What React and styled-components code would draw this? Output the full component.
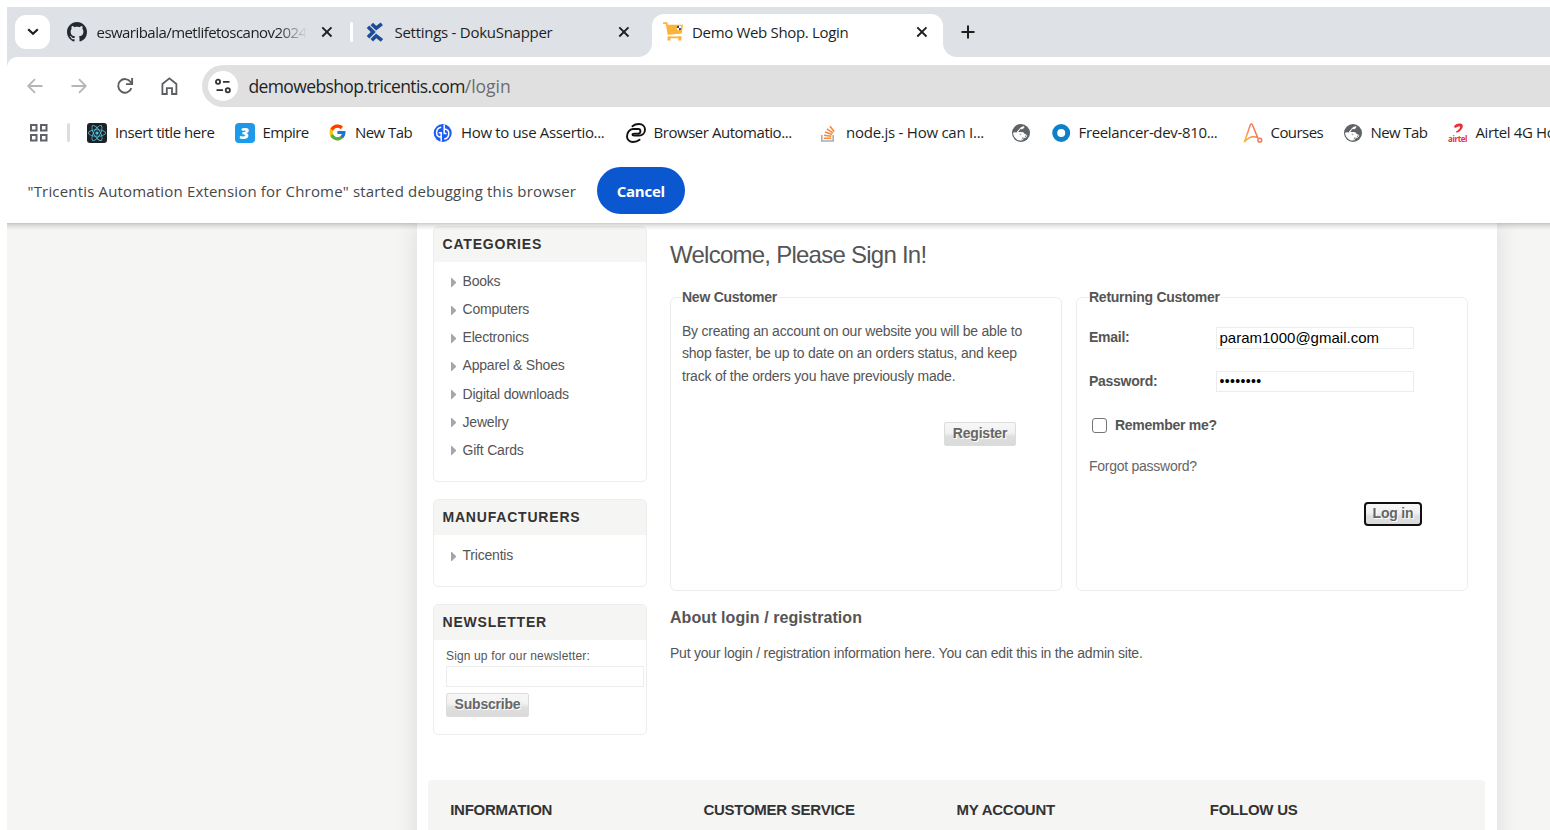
import React from "react";
import styled, { createGlobalStyle, css } from "styled-components";
import { FcGoogle } from "react-icons/fc";
import { FaReact } from "react-icons/fa";

const GlobalStyle = createGlobalStyle`
  * { box-sizing: border-box; }
  body { margin: 0; background: #fff; overflow: hidden; }
`;

/* ---------- browser window ---------- */

const Window = styled.div`
  height: 830px;
  padding: 7px 0 0 7px;
  display: flex;
  flex-direction: column;
  overflow: hidden;
  background: #fff;
  font-family: "Open Sans", "Noto Sans", sans-serif;
  font-size: 15px;
  color: #1f1f1f;
  white-space: nowrap;
`;

const TabStrip = styled.div`
  height: 50px;
  flex: none;
  display: flex;
  align-items: flex-start;
  padding-left: 8px;
  background: #dee1e6;
`;

const TabSearch = styled.button`
  width: 35px;
  height: 34px;
  margin-top: 8px;
  padding: 0;
  border: 0;
  border-radius: 11px;
  background: #fff;
  display: grid;
  place-items: center;
`;

const TabBox = styled.div`
  position: relative;
  width: ${(p) => p.$width}px;
  height: 43px;
  margin-top: 7px;
  padding: 0 ${(p) => p.$right}px 7px ${(p) => p.$left}px;
  display: flex;
  align-items: center;
  border-radius: 12px 12px 0 0;
  ${(p) =>
    p.$active &&
    css`
      background: #fff;
      &::before,
      &::after {
        content: "";
        position: absolute;
        bottom: 0;
        width: 14px;
        height: 14px;
      }
      &::before {
        left: -14px;
        background: radial-gradient(circle at 0 0, transparent 13.5px, #fff 14.5px);
      }
      &::after {
        right: -14px;
        background: radial-gradient(circle at 100% 0, transparent 13.5px, #fff 14.5px);
      }
    `}
  svg { flex: none; }
`;

const TabTitle = styled.span`
  flex: 1;
  min-width: 0;
  margin: 0 ${(p) => (p.$fade ? 14 : 10)}px 0 9.5px;
  overflow: hidden;
  line-height: 22px;
  letter-spacing: ${(p) => p.$ls}px;
  ${(p) =>
    p.$fade &&
    css`
      mask-image: linear-gradient(90deg, #000 86%, transparent 100%);
    `}
`;

const TabDivider = styled.i`
  width: 3px;
  height: 20px;
  margin-top: 15px;
  border-radius: 2px;
  background: #fff;
`;

const NewTab = styled.div`
  width: 14px;
  height: 50px;
  margin-left: 18px;
  display: grid;
  place-items: center;
`;

const Toolbar = styled.div`
  height: 50px;
  flex: none;
  display: flex;
  background: linear-gradient(#dee1e6, #dee1e6) 0 0 / 20px 12px no-repeat;
`;

const ToolbarInner = styled.div`
  flex: 1;
  display: flex;
  align-items: center;
  padding-top: 8px;
  padding-left: 16px;
  border-top-left-radius: 10px;
  background: #fff;
`;

const NavButton = styled.span`
  width: 24px;
  height: 24px;
  margin-right: ${(p) => p.$gap}px;
  display: grid;
  place-items: center;
`;

const AddressBar = styled.div`
  flex: 1;
  height: 42px;
  padding-left: 6px;
  display: flex;
  align-items: center;
  border-radius: 21px 0 0 21px;
  background: #e0e0e0;
`;

const SiteInfo = styled.span`
  width: 30px;
  height: 30px;
  margin-right: 10.5px;
  border-radius: 50%;
  background: #fff;
  display: grid;
  place-items: center;
`;

const Host = styled.span`
  font-size: 17.5px;
  line-height: 26px;
  letter-spacing: -0.62px;
`;

const Path = styled(Host)`
  color: #6a6d70;
  letter-spacing: 0;
`;

const Bookmarks = styled.div`
  height: 51px;
  flex: none;
  display: flex;
  align-items: center;
  padding-left: 22px;
`;

const AppsButton = styled.span`
  flex: none;
  width: 38px;
  display: flex;
`;

const BookmarkDivider = styled.i`
  flex: none;
  width: 3px;
  height: 19px;
  margin-right: 17px;
  border-radius: 2px;
  background: #dadde2;
`;

const Bookmark = styled.span`
  flex: none;
  width: ${(p) => p.$width}px;
  display: flex;
  align-items: center;
  gap: 8px;
  line-height: 22px;
  letter-spacing: ${(p) => p.$ls}px;
  svg { flex: none; }
`;

const BookmarkLabel = styled.span`
  padding-bottom: 2px;
`;

const InfoBar = styled.div`
  height: 65px;
  flex: none;
  display: flex;
  align-items: center;
  padding: 0 0 0 20.5px;
  color: #45484b;
  letter-spacing: 0.17px;
`;

const CancelButton = styled.button`
  width: 88px;
  height: 47px;
  margin-left: 20.6px;
  padding: 1px 0 0;
  border: 0;
  border-radius: 24px;
  background: #0b57d0;
  color: #fff;
  font: 700 15px "Open Sans", sans-serif;
  letter-spacing: -0.25px;
`;

/* ---------- shop page ---------- */

const Page = styled.div`
  position: relative;
  flex: 1;
  min-height: 0;
  padding-left: 410px;
  overflow: hidden;
  background: #f5f5f3;
  font-family: "Liberation Sans", Arial, sans-serif;
  font-size: 14px;
  letter-spacing: -0.22px;
  color: #555;
  &::after {
    content: "";
    position: absolute;
    inset: 0 0 auto 0;
    height: 7px;
    background: linear-gradient(rgba(0, 0, 0, 0.2), rgba(0, 0, 0, 0.09) 40%, transparent);
  }
`;

const Master = styled.div`
  width: 1080px;
  height: 640px;
  background: #fff;
  box-shadow: 0 0 22px rgba(0, 0, 0, 0.11);
`;

const Columns = styled.div`
  height: 557px;
  display: flex;
  padding: 3px 29px 0 16px;
`;

const Side = styled.aside`
  width: 214px;
  margin-right: 23px;
  display: flex;
  flex-direction: column;
  gap: 17px;
`;

const Block = styled.section`
  height: ${(p) => p.$height}px;
  flex: none;
  border: 1px solid #ededeb;
  border-radius: 5px;
  overflow: hidden;
`;

const BlockTitle = styled.h2`
  height: 35px;
  margin: 0;
  padding: 0 0 0 8.5px;
  background: #f5f5f3;
  color: #333;
  font-size: 14px;
  line-height: 34px;
  letter-spacing: 0.8px;
`;

const LinkList = styled.ul`
  list-style: none;
  margin: 0;
  padding: ${(p) => p.$top}px 0 0 17px;
`;

const LinkItem = styled.li`
  height: 28.15px;
  display: flex;
  align-items: center;
  gap: 6.5px;
  letter-spacing: -0.2px;
  svg { margin-top: 2px; }
`;

const NewsletterBody = styled.div`
  padding: 8px 0 0 12px;
  display: flex;
  flex-direction: column;
  align-items: flex-start;
`;

const NewsletterLabel = styled.label`
  height: 18px;
  font-size: 12px;
  line-height: 17px;
  letter-spacing: 0.14px;
`;

const TextField = styled.input`
  width: 198px;
  height: ${(p) => p.$height}px;
  margin: 0;
  padding: 0 3px 1px 2.5px;
  border: 1px solid #ececec;
  outline: 0;
  background: #fff;
  color: #000;
  font: 15px "Liberation Sans", Arial, sans-serif;
  letter-spacing: 0;
  ${(p) =>
    p.type === "password" &&
    css`
      font-size: 14px;
      letter-spacing: 0.35px;
    `}
`;

const ShopButton = styled.button`
  width: ${(p) => p.$width}px;
  height: 24px;
  margin-top: ${(p) => p.$top}px;
  padding: 0 0 2px;
  border: 1px solid #dcdcdc;
  border-radius: 2px;
  background: linear-gradient(#f7f7f7, #f1f1f1 45%, #dfdfdf 60%, #dadada);
  color: #666;
  font: bold 14px/18px "Liberation Sans", Arial, sans-serif;
  letter-spacing: -0.2px;
  text-shadow: 1px 1px 0 #fff;
  ${(p) =>
    p.$focused &&
    css`
      border: 2px solid #101010;
      border-radius: 4px;
    `}
`;

const Main = styled.main`
  flex: 1;
`;

const PageTitle = styled.h1`
  height: 63px;
  margin: 0;
  padding-top: 15px;
  color: #555;
  font-size: 24px;
  font-weight: 400;
  line-height: 28px;
  letter-spacing: -0.75px;
`;

const Panels = styled.div`
  display: flex;
  gap: 14px;
`;

const Panel = styled.fieldset`
  width: 392px;
  height: 302px;
  min-width: 0;
  margin: 0;
  padding: 0 45px 0 ${(p) => p.$left}px;
  border: 1px solid #ececec;
  border-radius: 6px;
`;

const Legend = styled.legend`
  padding: 0 1px 0 0;
  font-weight: 700;
  line-height: 16px;
  letter-spacing: -0.26px;
`;

const Intro = styled.p`
  width: 350px;
  margin: 14.7px 0 0;
  line-height: 22.4px;
`;

const ButtonLine = styled.div`
  display: flex;
  justify-content: flex-end;
`;

const FieldRow = styled.div`
  height: ${(p) => p.$height}px;
  margin-top: 22px;
  display: grid;
  grid-template-columns: 127px 198px;
  align-items: center;
`;

const FieldLabel = styled.label`
  padding-bottom: 2px;
  font-weight: 700;
  line-height: 16px;
  letter-spacing: -0.27px;
`;

const RememberRow = styled.div`
  height: 16px;
  margin-top: 26px;
  display: flex;
  align-items: center;
`;

const CheckBox = styled.span`
  width: 15px;
  height: 15px;
  margin: 0 8px 1px 3px;
  border: 1px solid #767676;
  border-radius: 3px;
  background: #fff;
`;

const ForgotLink = styled.a`
  display: block;
  margin-top: 24px;
  line-height: 16px;
  letter-spacing: -0.26px;
  color: #666;
`;

const TopicTitle = styled.h2`
  margin: 17px 0 0;
  font-size: 16px;
  line-height: 20px;
  letter-spacing: 0.07px;
`;

const TopicText = styled.p`
  margin: 16px 0 0;
  line-height: 18px;
`;

const Footer = styled.footer`
  height: 83px;
  margin: 0 12px 0 11px;
  padding: 19px 0 0 22.2px;
  display: grid;
  grid-template-columns: repeat(4, 253.2px);
  border-radius: 4px 4px 0 0;
  background: #f5f5f3;
`;

const FooterTitle = styled.h3`
  margin: 0;
  color: #333;
  font-size: 15px;
  line-height: 22px;
  letter-spacing: -0.25px;
`;

/* ---------- icons ---------- */

const CloseIcon = () => (
  <svg width="12" height="12" viewBox="0 0 12 12" stroke="#1f1f1f" strokeWidth="1.9">
    <path d="M1.3 1.3l9.2 9.2M10.5 1.3L1.3 10.5" />
  </svg>
);

const GithubIcon = () => (
  <svg width="20" height="20" viewBox="0 0 16 16" fill="#24292f">
    <path d="M8 0C3.58 0 0 3.58 0 8c0 3.54 2.29 6.53 5.47 7.59.4.07.55-.17.55-.38 0-.19-.01-.82-.01-1.49-2.01.37-2.53-.49-2.69-.94-.09-.23-.48-.94-.82-1.13-.28-.15-.68-.52-.01-.53.63-.01 1.08.58 1.23.82.72 1.21 1.87.87 2.33.66.07-.52.28-.87.51-1.07-1.78-.2-3.64-.89-3.64-3.95 0-.87.31-1.59.82-2.15-.08-.2-.36-1.02.08-2.12 0 0 .67-.21 2.2.82.64-.18 1.32-.27 2-.27.68 0 1.36.09 2 .27 1.53-1.04 2.2-.82 2.2-.82.44 1.1.16 1.92.08 2.12.51.56.82 1.27.82 2.15 0 3.07-1.87 3.75-3.65 3.95.29.25.54.73.54 1.48 0 1.07-.01 1.93-.01 2.2 0 .21.15.46.55.38A8.01 8.01 0 0 0 16 8c0-4.42-3.58-8-8-8z" />
  </svg>
);

const SnapperIcon = () => (
  <svg width="20" height="20" viewBox="0 0 20 20" fill="none" stroke="#1d4c96" strokeWidth="3.6">
    <path d="M6.8 2l4.4 4.2L16.8 1.8M3 4.8l5.2 5.2L3 15.2M6.8 18.2l4.4-4.4 5.8 4.6" />
  </svg>
);

const CartIcon = () => (
  <svg width="20" height="20" viewBox="0 0 20 20">
    <path d="M0 1.2h3.6l2 11.3M5 15.4h13.5" fill="none" stroke="#fdb338" strokeWidth="1.8" />
    <path d="M3.5 2.8H20l-1.2 8.8-13.6 1.2z" fill="#fdb338" />
    <path d="M6 14.5v4M16.8 14.5v4" stroke="#fdb338" strokeWidth="3" />
    <circle cx="16" cy="6" r="2.4" fill="#fff" />
    <path d="M16 3.6a2.4 2.4 0 0 0-2.4 2.4H16zM16 8.4A2.4 2.4 0 0 0 18.4 6H16z" fill="#3d4a5c" />
  </svg>
);

const BackIcon = ({ flip }) => (
  <svg width="18" height="18" viewBox="0 0 18 18" fill="none" stroke="#b4b6b8" strokeWidth="1.8" transform={flip ? "scale(-1 1)" : undefined}>
    <path d="M16.5 9H2.5M9 2.2L2.2 9 9 15.8" />
  </svg>
);

const ReloadIcon = () => (
  <svg width="18" height="18" viewBox="0 0 18 18" fill="none" stroke="#5b5e61" strokeWidth="1.9">
    <path d="M15.4 11.2A6.8 6.8 0 1 1 14.6 5L16 6.6" />
    <path d="M16.1 1v6.1H10" />
  </svg>
);

const HomeIcon = () => (
  <svg width="18" height="20" viewBox="0 0 18 20" fill="none" stroke="#5b5e61" strokeWidth="1.8">
    <path d="M2.4 8L9.4 2.4 16.4 8v10H12v-5.8H6.8V18H2.4z" />
  </svg>
);

const TuneIcon = () => (
  <svg width="18" height="16" viewBox="0 0 18 16" fill="none" stroke="#303134" strokeWidth="1.8">
    <circle cx="4" cy="3.8" r="2.1" />
    <path d="M9 3.8h6.5M2.5 12.2H9" />
    <circle cx="13.8" cy="12.2" r="2.1" />
  </svg>
);

const AppsIcon = () => (
  <svg width="20" height="20" viewBox="0 0 20 20" fill="none" stroke="#5f6368" strokeWidth="2">
    <path d="M2 2h5.5v5.5H2zM12 2h5.5v5.5H12zM2 12h5.5v5.5H2zM12 12h5.5v5.5H12z" />
  </svg>
);

const ReactTile = styled.span`
  flex: none;
  width: 20px;
  height: 20px;
  border-radius: 3px;
  background: #202124;
  color: #53c1de;
  display: grid;
  place-items: center;
`;

const EmpireTile = styled.span`
  flex: none;
  width: 20px;
  height: 20px;
  border-radius: 4px;
  background: linear-gradient(#2497e3, #179df0);
  color: #fff;
  font: italic 800 16px/20px "Open Sans", sans-serif;
  letter-spacing: 0;
  text-align: center;
`;

const GoogleIcon = () => <FcGoogle size={19} />;

const AssertIcon = () => (
  <svg width="20" height="20" viewBox="0 0 20 20">
    <circle cx="9.7" cy="10" r="9" fill="#1d5bf5" />
    <path d="M8.200 4.200C5 4.600 3.600 7 3.600 10s1.400 4 4.600 4.200V9.800H5.800M11.200 16c3.200-.4 4.600-2.800 4.600-5.800s-1.400-4-4.600-4.200v4.400h2.400M11.200 1.500v5M8.200 18.500v-5" fill="none" stroke="#fff" strokeWidth="1.500" />
  </svg>
);

const LoopIcon = () => (
  <svg width="20" height="20" viewBox="0 0 20 20" fill="none" stroke="#111" strokeWidth="1.9" strokeLinecap="round">
    <path d="M6.400 3.200C8 1.800 10.400 1 13 1c3.600 0 6 2.400 6 5.600 0 3.400-2.400 6-6 6H8.200c-2.400 0-2.400-2 0-2h4.400" />
    <path d="M13.600 16.800C12 18.200 9.600 19 7 19c-3.600 0-6-2.400-6-5.600 0-3.400 2.400-7.400 6-7.400h5.400c2.600 0 2.600 4.600.2 4.600" />
  </svg>
);

const StackIcon = () => (
  <svg width="20" height="20" viewBox="0 0 20 20" fill="none">
    <path d="M3.800 12v6h11.400v-6" stroke="#a9adb2" strokeWidth="1.6" />
    <path d="M5.800 15.200h7.400M6 12.200l7.300 1.100M7 9l7 2.600M9 5.800l6 4.300M12 3.200l4.200 5.600" stroke="#f58a3c" strokeWidth="1.6" />
  </svg>
);

const GlobeIcon = () => (
  <svg width="20" height="20" viewBox="0 0 20 20">
    <circle cx="10" cy="10" r="9" fill="#5f6368" />
    <path d="M12.800 3.400c.2 1.600-.6 2.300-1.900 2.300H9.200c-.5 0-.8.4-.8.900 0 .9-.6 1.300-1.400 1.300v1.700h4.300c1.300 0 2 .9 2 2h1c1 0 1.500.7 1.300 1.500-.3 1.300-1.300 1.500-2.600 1.500-.9 0-1 .7-1 1.300 0 .8-.6 1-1.500 1L9.200 17.100c-3.800-.3-6.600-3.500-6.500-7.300l4.400.1c1.200.2 1.600 1 2 2.100.3.700 1.100.8 2.200.7" fill="none" stroke="#fff" strokeWidth="1" />
    <path d="M12.800 3.200c.2 1.800-.6 2.500-1.900 2.500H9.200c-.5 0-.8.4-.8.900 0 .9-.6 1.300-1.400 1.300v1.700h4.300c1.300 0 2 .9 2 2h1.600c-.1 2-1.300 2.800-3 2.800-.9 0-1 .7-1 1.300 0 .8-.6 1.400-1.700 1.400C5.400 17 2.600 13.800 2.700 10h3.600c1.600 0 2.200.9 2.400 1.700.2.700.9.800 1.900.7l-.8-1.600H6.200V8.600l4-4.600z" fill="#fff" />
  </svg>
);

const RingIcon = () => (
  <svg width="20" height="20" viewBox="0 0 20 20" fill="none">
    <circle cx="10.200" cy="10" r="6.500" stroke="#0d80c8" strokeWidth="5" />
  </svg>
);

const CoursesIcon = () => (
  <svg width="20" height="20" viewBox="0 0 20 20" fill="none" strokeWidth="1.5">
    <defs>
      <linearGradient id="coursesStroke" x1="0" y1="1" x2="1" y2="0">
        <stop offset="0" stopColor="#fbc02d" />
        <stop offset=".45" stopColor="#f58a5b" />
        <stop offset="1" stopColor="#ef6a50" />
      </linearGradient>
    </defs>
    <path d="M1.200 19.300C3.400 13.600 6 5.600 7.200 2.200c.4-1.500 1.900-1.500 2.400 0l5.400 13.200M1.600 19c3-4 7.400-6.600 13-4.400" stroke="url(#coursesStroke)" />
    <circle cx="16.800" cy="17.200" r="1.900" stroke="#f07a5c" />
  </svg>
);

const AirtelIcon = () => (
  <svg width="20" height="20" viewBox="0 0 20 20">
    <path d="M6 3.800C7 1.200 10 .2 12.400.6c2.400.4 3 2.200 2 4.400-1 2.200-3.600 4.300-5.200 4.600-1.400.2-1.600-1-.4-1.600 1.600-.8 3-2.200 3.200-3.400.1-1-.6-1.400-1.600-1.200-1.600.3-3.400 2.800-4.400.4z" fill="#ea2f36" />
    <text x="9.600" y="19" textAnchor="middle" fontFamily="Open Sans, sans-serif" fontWeight="700" fontSize="8" letterSpacing="-.4" fill="#ea2f36">airtel</text>
  </svg>
);

const Arrow = () => (
  <svg width="5" height="9" viewBox="0 0 5 9">
    <path d="M0 0h.8L5 4v1L.8 9H0z" fill="#a6a6a6" />
  </svg>
);

/* ---------- data ---------- */

const bookmarks = [
  { icon: <ReactTile><FaReact size={18} /></ReactTile>, label: "Insert title here", width: 147.5, ls: -0.45 },
  { icon: <EmpireTile>3</EmpireTile>, label: "Empire", width: 93.5, ls: -0.6 },
  { icon: <GoogleIcon />, label: "New Tab", width: 105, ls: -0.57 },
  { icon: <AssertIcon />, label: "How to use Assertio...", width: 192.5, ls: -0.34 },
  { icon: <LoopIcon />, label: "Browser Automatio...", width: 192.5, ls: -0.46 },
  { icon: <StackIcon />, label: "node.js - How can I...", width: 192.5, ls: -0.25 },
  { icon: <GlobeIcon />, label: "", width: 40, ls: 0 },
  { icon: <RingIcon />, label: "Freelancer-dev-810...", width: 192, ls: -0.34 },
  { icon: <CoursesIcon />, label: "Courses", width: 100, ls: -0.55 },
  { icon: <GlobeIcon />, label: "New Tab", width: 105, ls: -0.6 },
  { icon: <AirtelIcon />, label: "Airtel 4G Ho", width: 102, ls: -0.37 },
];

const categories = ["Books", "Computers", "Electronics", "Apparel & Shoes", "Digital downloads", "Jewelry", "Gift Cards"];
const footerTitles = ["INFORMATION", "CUSTOMER SERVICE", "MY ACCOUNT", "FOLLOW US"];

const Tab = ({ icon, title, ls, width, left, right, active, fade }) => (
  <TabBox $width={width} $left={left} $right={right} $active={active}>
    {icon}
    <TabTitle $ls={ls} $fade={fade}>{title}</TabTitle>
    <CloseIcon />
  </TabBox>
);

const Links = ({ items, top }) => (
  <LinkList $top={top}>
    {items.map((item) => (
      <LinkItem key={item}>
        <Arrow />
        {item}
      </LinkItem>
    ))}
  </LinkList>
);

export default function App() {
  return (
    <>
      <GlobalStyle />
      <Window>
        <TabStrip>
          <TabSearch aria-label="Search tabs">
            <svg width="12" height="8" viewBox="0 0 12 8" fill="none" stroke="#1f1f1f" strokeWidth="2.2">
              <path d="M1.2 1.2L6 5.8l4.8-4.6" />
            </svg>
          </TabSearch>
          <Tab icon={<GithubIcon />} title="eswaribala/metlifetoscanov2024" ls={-0.54} width={300} left={17} right={17} fade />
          <TabDivider />
          <Tab icon={<SnapperIcon />} title="Settings - DokuSnapper" ls={-0.27} width={299} left={12} right={22} />
          <Tab icon={<CartIcon />} title="Demo Web Shop. Login" ls={-0.33} width={291} left={10.5} right={15} active />
          <NewTab>
            <svg width="14" height="14" viewBox="0 0 14 14" stroke="#1f1f1f" strokeWidth="2">
              <path d="M7 .5v13M.5 7h13" />
            </svg>
          </NewTab>
        </TabStrip>

        <Toolbar>
          <ToolbarInner>
            <NavButton $gap={20}><BackIcon /></NavButton>
            <NavButton $gap={21.5}><BackIcon flip /></NavButton>
            <NavButton $gap={20.5}><ReloadIcon /></NavButton>
            <NavButton $gap={21}><HomeIcon /></NavButton>
            <AddressBar>
              <SiteInfo><TuneIcon /></SiteInfo>
              <Host>demowebshop.tricentis.com</Host>
              <Path>/login</Path>
            </AddressBar>
          </ToolbarInner>
        </Toolbar>

        <Bookmarks>
          <AppsButton><AppsIcon /></AppsButton>
          <BookmarkDivider />
          {bookmarks.map((b, i) => (
            <Bookmark key={i} $width={b.width} $ls={b.ls}>
              {b.icon}
              {b.label && <BookmarkLabel>{b.label}</BookmarkLabel>}
            </Bookmark>
          ))}
        </Bookmarks>

        <InfoBar>
          "Tricentis Automation Extension for Chrome" started debugging this browser
          <CancelButton>Cancel</CancelButton>
        </InfoBar>

        <Page>
          <Master>
            <Columns>
              <Side>
                <Block $height={256}>
                  <BlockTitle>CATEGORIES</BlockTitle>
                  <Links items={categories} top={5} />
                </Block>
                <Block $height={88}>
                  <BlockTitle>MANUFACTURERS</BlockTitle>
                  <Links items={["Tricentis"]} top={6} />
                </Block>
                <Block $height={131}>
                  <BlockTitle>NEWSLETTER</BlockTitle>
                  <NewsletterBody>
                    <NewsletterLabel>Sign up for our newsletter:</NewsletterLabel>
                    <TextField type="text" $height={21} />
                    <ShopButton $width={83} $top={6}>Subscribe</ShopButton>
                  </NewsletterBody>
                </Block>
              </Side>

              <Main>
                <PageTitle>Welcome, Please Sign In!</PageTitle>
                <Panels>
                  <Panel $left={11}>
                    <Legend>New Customer</Legend>
                    <Intro>
                      By creating an account on our website you will be able to
                      <br />
                      shop faster, be up to date on an orders status, and keep
                      <br />
                      track of the orders you have previously made.
                    </Intro>
                    <ButtonLine>
                      <ShopButton $width={72} $top={35.1}>Register</ShopButton>
                    </ButtonLine>
                  </Panel>
                  <Panel $left={12}>
                    <Legend>Returning Customer</Legend>
                    <FieldRow $height={22}>
                      <FieldLabel>Email:</FieldLabel>
                      <TextField type="text" $height={22} defaultValue="param1000@gmail.com" />
                    </FieldRow>
                    <FieldRow $height={21}>
                      <FieldLabel>Password:</FieldLabel>
                      <TextField type="password" $height={21} defaultValue="password" />
                    </FieldRow>
                    <RememberRow>
                      <CheckBox />
                      <FieldLabel>Remember me?</FieldLabel>
                    </RememberRow>
                    <ForgotLink>Forgot password?</ForgotLink>
                    <ButtonLine>
                      <ShopButton $width={58} $top={28} $focused>Log in</ShopButton>
                    </ButtonLine>
                  </Panel>
                </Panels>
                <TopicTitle>About login / registration</TopicTitle>
                <TopicText>
                  Put your login / registration information here. You can edit this in the admin site.
                </TopicText>
              </Main>
            </Columns>
            <Footer>
              {footerTitles.map((t) => (
                <FooterTitle key={t}>{t}</FooterTitle>
              ))}
            </Footer>
          </Master>
        </Page>
      </Window>
    </>
  );
}
